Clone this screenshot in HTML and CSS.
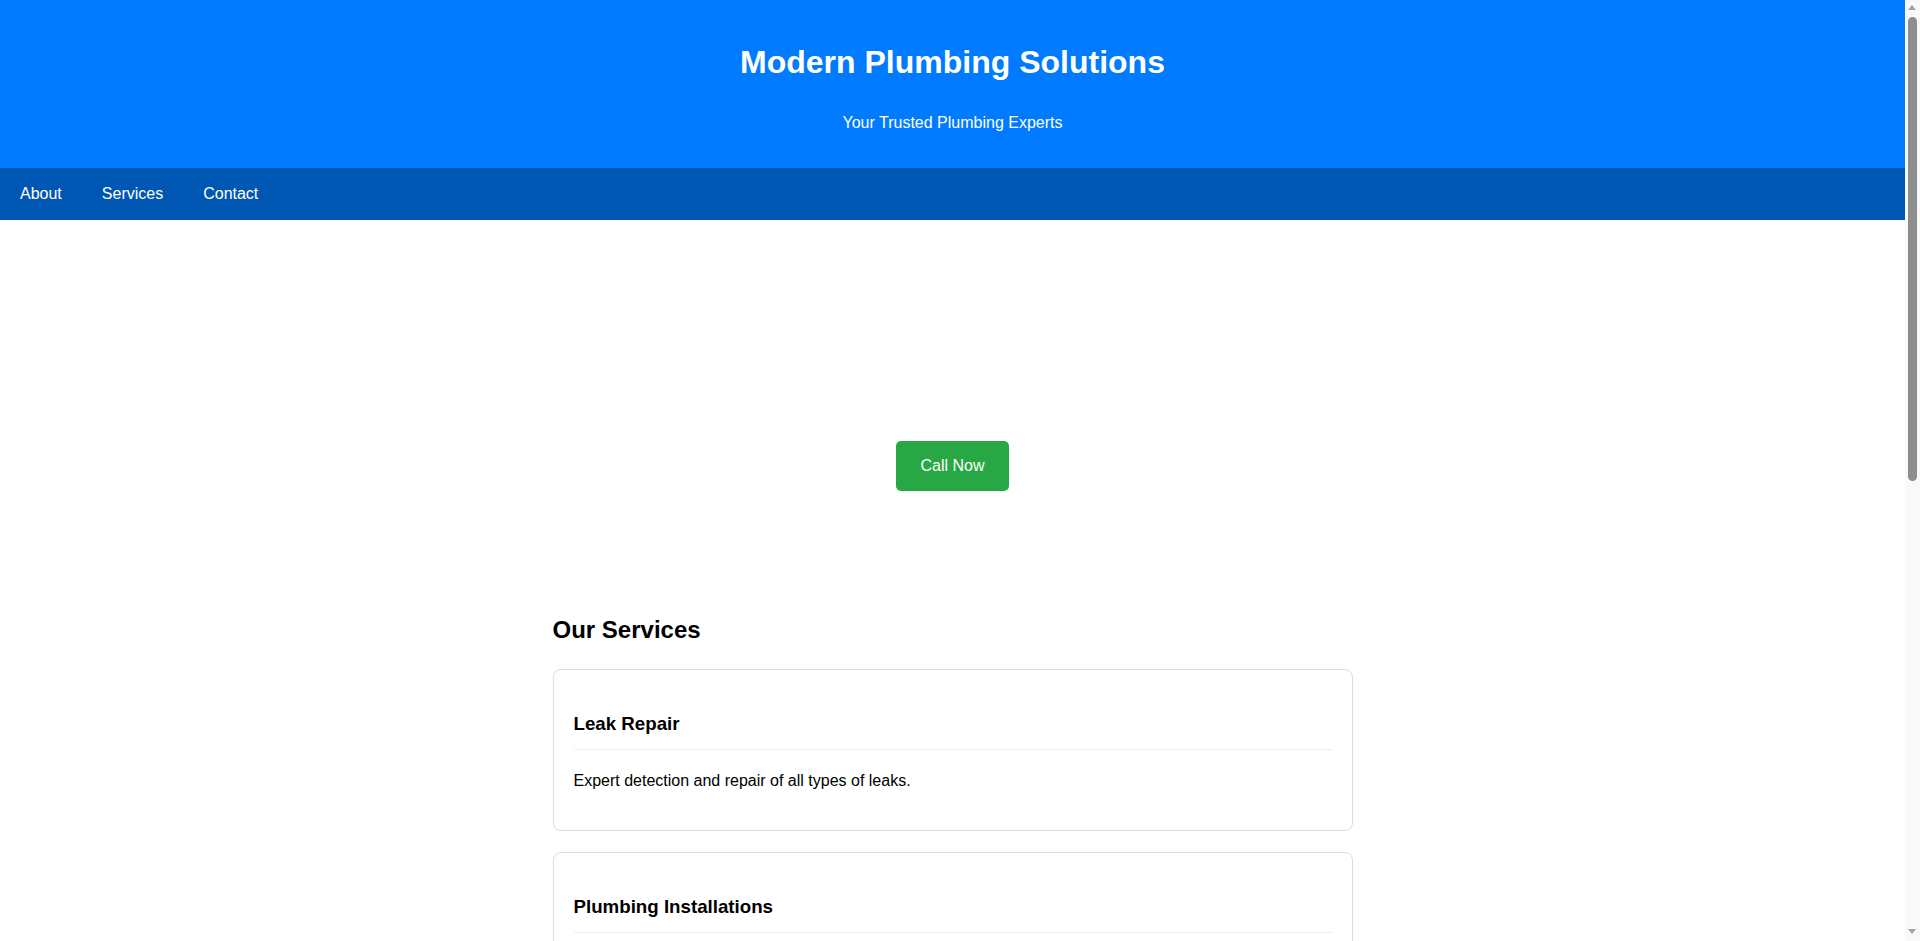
FILE: index.html
```html
<!DOCTYPE html>
<html lang="en">
<head>
<meta charset="UTF-8">
<title>Modern Plumbing Solutions</title>
<link rel="stylesheet" href="styles.css">
</head>
<body>
<header class="site-header">
  <h1 class="site-title">Modern Plumbing Solutions</h1>
  <p class="site-tagline">Your Trusted Plumbing Experts</p>
</header>
<nav class="site-nav">
  <a class="nav-link" href="#about">About</a>
  <a class="nav-link" href="#services">Services</a>
  <a class="nav-link" href="#contact">Contact</a>
</nav>
<section class="hero">
  <a class="btn-call" href="#contact">Call Now</a>
</section>
<main class="container">
  <section class="services" id="services">
    <h2 class="section-title">Our Services</h2>
    <article class="card">
      <h3 class="card-title">Leak Repair</h3>
      <p class="card-text">Expert detection and repair of all types of leaks.</p>
    </article>
    <article class="card">
      <h3 class="card-title">Plumbing Installations</h3>
      <p class="card-text">Professional installation of fixtures, pipes and appliances.</p>
    </article>
    <article class="card">
      <h3 class="card-title">Drain Cleaning</h3>
      <p class="card-text">Fast and effective clearing of clogged drains and sewer lines.</p>
    </article>
  </section>
  <section class="about" id="about">
    <h2 class="section-title">About Us</h2>
    <article class="card">
      <h3 class="card-title">Who We Are</h3>
      <p class="card-text">A team of licensed plumbers serving the community for years.</p>
    </article>
  </section>
  <section class="contact" id="contact">
    <h2 class="section-title">Contact</h2>
    <article class="card">
      <h3 class="card-title">Get in Touch</h3>
      <p class="card-text">Call us at (555) 123-4567 or email info@modernplumbing.com.</p>
    </article>
  </section>
</main>
<footer class="site-footer">
  <p class="footer-text">&copy; 2024 Modern Plumbing Solutions</p>
</footer>
<div class="scrollbar" aria-hidden="true">
  <span class="scroll-arrow scroll-arrow-up"></span>
  <span class="scroll-thumb"></span>
  <span class="scroll-arrow scroll-arrow-down"></span>
</div>
</body>
</html>
```
FILE: styles.css
```css
html, body {
  padding: 0;
}
html {
  margin: 0;
}
body {
  margin: 0 15px 0 0;
  font-family: "Liberation Sans", Arial, Helvetica, sans-serif;
  color: #000;
  background: #fff;
}
.site-header {
  background: #007bff;
  color: #fff;
  text-align: center;
  padding: 24px 20px 19.8px;
}
.site-title {
  font-size: 32px;
  font-weight: bold;
  margin: 20px 0 0;
}
.site-tagline {
  font-size: 16px;
  margin: 33px 0 16px;
}
.site-nav {
  background: #0056b3;
  display: flex;
}
.nav-link {
  color: #fff;
  text-decoration: none;
  font-size: 16px;
  padding: 17.3px 20px;
}
.hero {
  display: flex;
  justify-content: center;
  padding: 221px 20px 104px;
}
.btn-call {
  display: inline-block;
  background: #28a745;
  color: #fff;
  text-decoration: none;
  font-size: 16px;
  padding: 16px 24px;
  border-radius: 5px;
}
.container {
  max-width: 800px;
  margin: 0 auto;
}
.section-title {
  font-size: 24px;
  font-weight: bold;
  margin: 21px 0 25px;
}
.card {
  border: 1px solid #ddd;
  border-radius: 8px;
  padding: 24px 20px;
  margin-bottom: 21px;
}
.card-title {
  font-size: 18.72px;
  font-weight: bold;
  margin: 18.72px 0 0;
  padding-bottom: 14px;
  border-bottom: 1px solid #eee;
}
.card-text {
  font-size: 16px;
  margin: 22px 0 16px;
}
.site-footer {
  background: #0056b3;
  color: #fff;
  text-align: center;
  padding: 40px 20px;
  margin-top: 60px;
}
.footer-text {
  margin: 0;
}
.scrollbar {
  position: fixed;
  top: 0;
  right: 0;
  width: 15px;
  height: 100vh;
  background: #f9f9f9;
}
.scroll-thumb {
  position: absolute;
  top: 17px;
  left: 3px;
  width: 9px;
  height: 464px;
  background: #8e8e8e;
  border-radius: 5px;
}
.scroll-arrow {
  position: absolute;
  left: 3px;
  width: 0;
  height: 0;
  border-left: 4px solid transparent;
  border-right: 4px solid transparent;
}
.scroll-arrow-up {
  top: 5px;
  border-bottom: 5px solid #a3a3a3;
}
.scroll-arrow-down {
  bottom: 7px;
  border-top: 5px solid #a3a3a3;
}
```
